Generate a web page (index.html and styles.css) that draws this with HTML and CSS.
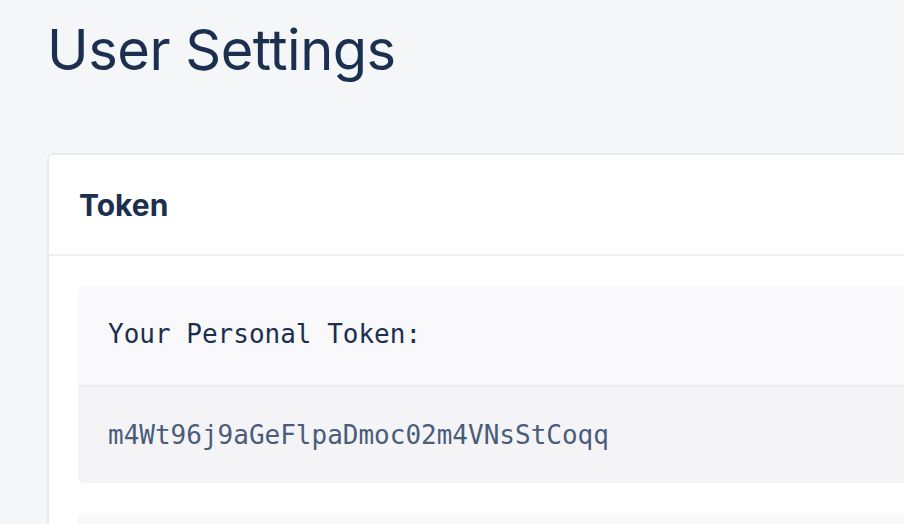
FILE: index.html
```html
<!DOCTYPE html>
<html>
<head>
<meta charset="utf-8">
<link rel="stylesheet" href="styles.css">
</head>
<body>
<main class="page">
  <h1 class="title">User Settings</h1>
  <section class="card">
    <header class="card-header">
      <h2 class="card-title">Token</h2>
    </header>
    <div class="card-body">
      <div class="token-box">
        <div class="token-label">Your Personal Token:</div>
        <div class="token-value">m4Wt96j9aGeFlpaDmoc02m4VNsStCoqq</div>
      </div>
      <div class="token-box next"></div>
    </div>
  </section>
</main>
</body>
</html>
```
FILE: styles.css
```css
html, body {
  margin: 0;
  padding: 0;
  background: #f5f6f8;
  overflow: hidden;
}
body {
  font-family: Inter, "Helvetica Neue", Arial, sans-serif;
  color: #1b2f4f;
}
.page {
  padding: 20px 0 0 47px;
  width: 1100px;
}
.title {
  margin: 0;
  font-size: 56px;
  font-weight: 400;
  line-height: 60px;
  letter-spacing: -0.5px;
  color: #1b2f4f;
}
.card {
  margin-top: 73px;
  background: #fff;
  border: 2px solid #e9ebef;
  border-radius: 6px;
}
.card-header {
  height: 99px;
  display: flex;
  align-items: center;
  padding: 0 30px;
  border-bottom: 2px solid #eef0f3;
}
.card-title {
  margin: 0;
  font-size: 30px;
  font-weight: 700;
  color: #1b2f4f;
}
.card-body {
  padding: 30px 29px;
  display: flex;
  flex-direction: column;
  gap: 30px;
}
.token-box {
  background: #f9f9fb;
  border-radius: 6px;
  overflow: hidden;
  font-family: "DejaVu Sans Mono", Menlo, monospace;
  font-size: 26px;
}
.token-label {
  height: 101px;
  box-sizing: border-box;
  padding: 0 30px 4px;
  display: flex;
  align-items: center;
  color: #1b2f4f;
  border-bottom: 2px solid #ececf0;
}
.token-value {
  height: 96px;
  display: flex;
  align-items: center;
  padding: 0 30px;
  background: #f4f4f7;
  color: #4a5c7a;
}
.token-box.next {
  height: 100px;
}
```
